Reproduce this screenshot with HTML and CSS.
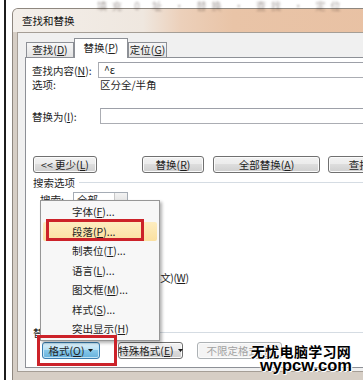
FILE: index.html
```html
<!DOCTYPE html>
<html lang="zh-CN">
<head>
  <meta charset="UTF-8">
  <meta name="viewport" content="width=device-width, initial-scale=1">
  <title>查找和替换</title>
  <link rel="stylesheet" href="styles.css">
</head>
<body>
  <div class="screen">
    <div class="desk">
      <div class="topstrip">填充 0 址 · 替换 · 查找 · 定位</div>
      <div class="window">
        <div class="titlebar">查找和替换</div>
        <div class="client">
          <div class="tabs">
            <div class="tab tab-find">查找(<u>D</u>)</div>
            <div class="tab tab-replace">替换(<u>P</u>)</div>
            <div class="tab tab-goto">定位(<u>G</u>)</div>
          </div>
          <div class="panel">
            <div class="field">
              <span class="field-label">查找内容(<u>N</u>):</span>
              <div class="textbox">^ε</div>
            </div>
            <div class="opt">
              <span class="opt-label">选项:</span>
              <span>区分全/半角</span>
            </div>
            <div class="field field-replace">
              <span class="field-label wide">替换为(<u>I</u>):</span>
              <div class="textbox"></div>
            </div>
            <div class="btn-row">
              <div class="btn btn-less"><span>&lt;&lt; 更少(<u>L</u>)</span></div>
              <div class="btn btn-replace"><span>替换(<u>R</u>)</span></div>
              <div class="btn btn-all"><span>全部替换(<u>A</u>)</span></div>
              <div class="btn btn-next"><span>查找下一处(<u>F</u>)</span></div>
            </div>
            <div class="group">搜索选项</div>
            <div class="search">
              <span class="search-label">搜索:</span>
              <div class="select">
                <span class="select-value">全部</span>
                <span class="select-arrow"></span>
              </div>
            </div>
            <div class="checks">
              <div class="check"><span class="box"></span><span>区分大小写(<u>H</u>)</span></div>
              <div class="check"><span class="box"></span><span>全字匹配(<u>Y</u>)</span></div>
              <div class="check"><span class="box"></span><span>使用通配符(<u>U</u>)</span></div>
              <div class="check"><span class="box"></span><span>同音(英文)(<u>K</u>)</span></div>
              <div class="check"><span class="box"></span><span>查找单词的所有形式(英文)(<u>W</u>)</span></div>
            </div>
            <div class="group group-replace">替换</div>
            <div class="btn-row bottom-row">
              <div class="btn btn-format"><span>格式(<u>O</u>)</span>
                <svg class="caret" width="5" height="3" viewBox="0 0 5 3"><path d="M0 0H5L2.5 3Z" fill="#1a1a1a"/></svg>
              </div>
              <div class="btn btn-special"><span>特殊格式(<u>E</u>)</span>
                <svg class="caret" width="5" height="3" viewBox="0 0 5 3"><path d="M0 0H5L2.5 3Z" fill="#1a1a1a"/></svg>
              </div>
              <div class="btn btn-off"><span>不限定格式(<u>T</u>)</span></div>
            </div>
          </div>
        </div>
      </div>
    </div>

    <div class="menu">
      <div class="menu-item">字体(<u>F</u>)...</div>
      <div class="menu-item hot">段落(<u>P</u>)...</div>
      <div class="menu-item">制表位(<u>T</u>)...</div>
      <div class="menu-item">语言(<u>L</u>)...</div>
      <div class="menu-item">图文框(<u>M</u>)...</div>
      <div class="menu-item">样式(<u>S</u>)...</div>
      <div class="menu-item">突出显示(<u>H</u>)</div>
    </div>

    <div class="mark mark-menu"></div>
    <div class="mark mark-format"></div>

    <div class="watermark">
      <div class="wm-cn">无忧电脑学习网</div>
      <div class="wm-en">wypcw.com</div>
    </div>
  </div>
</body>
</html>
```

FILE: styles.css
```css
* {
  box-sizing: border-box;
}
body {
  margin: 0;
  background: #fff;
  font-family: "Noto Sans CJK SC", "Noto Sans", sans-serif;
  font-size: 10.5px;
  color: #1e1e1e;
}
u {
  text-underline-offset: 1px;
}
.screen {
  position: relative;
  width: 363px;
  height: 380px;
  overflow: hidden;
  background: #fff;
}
.desk {
  height: 380px;
  margin-left: 4px;
  border-left: 2px solid #1c1c1c;
  padding-left: 6px;
}
.topstrip {
  height: 8px;
  padding-left: 85px;
  font-size: 10px;
  line-height: 12px;
  letter-spacing: 5px;
  white-space: nowrap;
  color: rgba(60, 45, 40, 0.45);
  filter: blur(1.2px);
}

/* window frame */
.window {
  width: 440px;
  border: 1px solid #8e877f;
  border-bottom: none;
  border-radius: 6px 6px 0 0;
  background: #d6cec5;
  padding-bottom: 12px;
}
.titlebar {
  height: 23px;
  display: flex;
  align-items: center;
  padding-left: 9px;
  color: #111;
  border-radius: 5px 5px 0 0;
  background: linear-gradient(to right, #f3efea 0, #efe7df 130px, #ecd0ba 168px, #e9c4a7 220px, #e8c0a2 100%);
}
.client {
  margin: 0 4px;
  border: 1px solid #a59e96;
  background: #f0f0f0;
  padding: 5px 0 3px 7px;
}

/* tabs */
.tabs {
  display: flex;
  align-items: flex-end;
  height: 19px;
  padding-left: 1px;
}
.tab {
  height: 15px;
  line-height: 14px;
  text-align: center;
  white-space: nowrap;
  border: 1px solid #8d9096;
  border-bottom: none;
  background: linear-gradient(#f7f7f7, #e3e3e3);
}
.tab-find {
  width: 48px;
}
.tab-replace {
  position: relative;
  z-index: 1;
  width: 54px;
  height: 20px;
  line-height: 17px;
  margin-bottom: -1px;
  background: #fff;
}
.tab-goto {
  width: 39px;
}
.panel {
  background: #fff;
  border: 1px solid #8d9096;
  padding: 4px 0 8px 6px;
}

/* fields */
.field {
  display: flex;
  align-items: center;
  height: 16px;
}
.field-label {
  flex-shrink: 0;
  width: 66px;
  white-space: nowrap;
}
.field-label.wide {
  width: 68px;
}
.field-replace {
  margin-top: 17px;
}
.textbox {
  flex: 1;
  height: 16px;
  line-height: 14px;
  padding-left: 5px;
  border: 1px solid #abadb3;
  border-top-color: #9da0a8;
  background: #fff;
}
.opt {
  display: flex;
  align-items: center;
  height: 13px;
}
.opt-label {
  width: 68px;
}

/* buttons */
.btn-row {
  display: flex;
  margin-top: 32px;
  padding-left: 1px;
}
.btn {
  flex-shrink: 0;
  height: 17px;
  display: flex;
  align-items: center;
  justify-content: center;
  line-height: 15px;
  white-space: nowrap;
  border: 1px solid #707070;
  border-radius: 3px;
  box-shadow: inset 0 0 0 1px #fbfbfb;
  background: linear-gradient(#f2f2f2 0, #ebebeb 50%, #dddddd 50%, #cfcfcf 100%);
}
.btn-less {
  width: 64px;
}
.btn-replace {
  width: 62px;
  margin-left: 45px;
}
.btn-all {
  width: 107px;
  margin-left: 9px;
}
.btn-next {
  width: 107px;
  margin-left: 8px;
}

/* groups */
.group {
  display: flex;
  align-items: center;
  height: 14px;
  margin-top: 2px;
  padding-left: 1px;
}
.group::after {
  content: "";
  flex: 1;
  margin-left: 4px;
  border-top: 1px solid #d5dce3;
}
.search {
  display: flex;
  align-items: center;
  height: 15px;
  margin-top: 3px;
  padding-left: 8px;
}
.search-label {
  width: 33px;
}
.select {
  width: 55px;
  height: 15px;
  display: flex;
  border: 1px solid #a5acb5;
  background: #fff;
}
.select-value {
  flex: 1;
  padding-left: 3px;
  line-height: 13px;
}
.select-arrow {
  width: 13px;
  border-left: 1px solid #c8c8c8;
  background: linear-gradient(#f3f3f3, #dcdcdc);
}
.checks {
  margin-top: 3px;
  padding-left: 10px;
  letter-spacing: -0.4px;
}
.check {
  height: 15px;
  display: flex;
  align-items: center;
  gap: 3px;
  white-space: nowrap;
}
.box {
  width: 11px;
  height: 11px;
  border: 1px solid #8f8f8f;
  background: linear-gradient(135deg, #e6e6e6, #fff);
}
.group-replace {
  margin-top: 40px;
}
.bottom-row {
  margin-top: 3px;
  padding-left: 10px;
}
.caret {
  flex-shrink: 0;
  margin-left: 4px;
}
.btn-format {
  width: 58px;
  border-color: #3c7fb1;
  box-shadow: inset 0 0 0 1px #c4e5f6;
  background: linear-gradient(#dff2fb 0, #b8e0f4 45%, #86c7e9 50%, #66b1dc 100%);
}
.btn-special {
  width: 65px;
  margin-left: 18px;
}
.btn-off {
  width: 85px;
  margin-left: 14px;
  color: #a2a2a2;
  border-color: #adb2b5;
  background: #f4f4f4;
}

/* popup menu */
.menu {
  position: absolute;
  left: 40px;
  top: 200px;
  width: 120px;
  height: 141px;
  padding: 1px 2px;
  border: 1px solid #979797;
  background: #f7f7f7;
  box-shadow: 2px 2px 3px rgba(0, 0, 0, 0.3);
}
.menu-item {
  height: 19.5px;
  line-height: 19.5px;
  padding-left: 29px;
  white-space: nowrap;
}
.menu-item.hot {
  background: linear-gradient(#fdedc0, #fbe0a0);
  border-radius: 2px;
}

/* annotations */
.mark {
  position: absolute;
  border: 3px solid #cc2229;
}
.mark-menu {
  left: 46px;
  top: 219px;
  width: 98px;
  height: 22px;
}
.mark-format {
  left: 37px;
  top: 335px;
  width: 80px;
  height: 31px;
}
.watermark {
  position: absolute;
  left: 251px;
  top: 344px;
  color: #000;
  text-shadow: 0 0 2px #fff, 0 0 2px #fff, 1px 1px 0 #fff;
}
.wm-cn {
  font-weight: bold;
  font-size: 14px;
  letter-spacing: 0.3px;
  line-height: 15px;
}
.wm-en {
  font-family: "Liberation Sans", Arial, sans-serif;
  font-weight: bold;
  font-size: 16.5px;
  line-height: 13px;
  margin-left: 9px;
}
```
